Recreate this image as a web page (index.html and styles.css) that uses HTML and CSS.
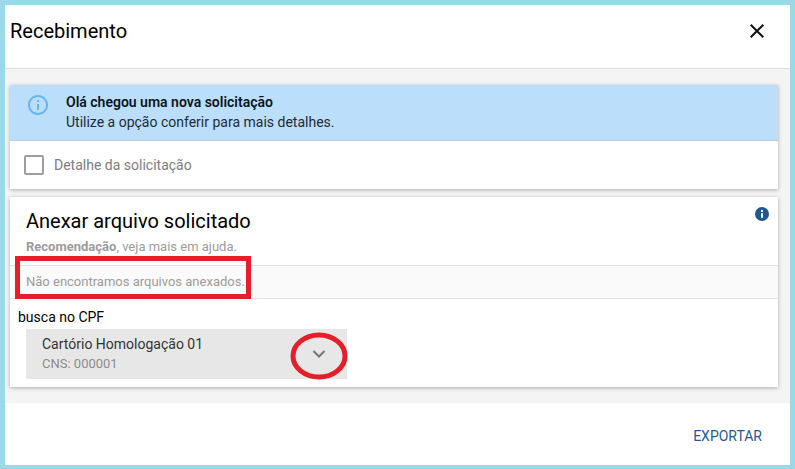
FILE: index.html
```html
<!DOCTYPE html>
<html lang="pt-BR">
<head>
  <meta charset="UTF-8">
  <meta name="viewport" content="width=device-width, initial-scale=1.0">
  <title>Recebimento</title>
  <link rel="stylesheet" href="styles.css">
</head>
<body>
  <div class="dialog">
    <header class="dialog-header">
      <h1>Recebimento</h1>
      <button class="close-btn" type="button" aria-label="Fechar">
        <svg viewBox="0 0 24 24" width="24" height="24"><path d="M5.7 5.7 18.3 18.3M18.3 5.7 5.7 18.3"/></svg>
      </button>
    </header>

    <main class="dialog-content">
      <section class="card">
        <div class="banner">
          <svg class="banner-icon" viewBox="0 0 24 24" width="24" height="26"><path d="M11 7h2v2h-2zm0 4h2v6h-2zm1-9C6.48 2 2 6.48 2 12s4.48 10 10 10 10-4.48 10-10S17.52 2 12 2zm0 18c-4.41 0-8-3.59-8-8s3.59-8 8-8 8 3.59 8 8-3.59 8-8 8z"/></svg>
          <div>
            <strong>Olá chegou uma nova solicitação</strong>
            <p>Utilize a opção conferir para mais detalhes.</p>
          </div>
        </div>
        <label class="check-row">
          <input type="checkbox">
          <span>Detalhe da solicitação</span>
        </label>
      </section>

      <section class="card">
        <div class="card-header">
          <div>
            <h2>Anexar arquivo solicitado</h2>
            <p class="hint"><b>Recomendação</b>, veja mais em ajuda.</p>
          </div>
          <button class="help-btn" type="button" aria-label="Ajuda">
            <svg viewBox="0 0 24 24" width="16" height="16"><path d="M12 1.5a10.5 10.5 0 1 0 0 21 10.5 10.5 0 1 0 0-21zm1.5 16h-3V11h3v6.5zm0-8.5h-3V6h3v3z"/></svg>
          </button>
        </div>

        <div class="empty-row">
          <p class="hint">Não encontramos arquivos anexados.</p>
          <span class="mark-box"></span>
        </div>

        <div class="search">
          <label for="cartorio">busca no CPF</label>
          <div class="select">
            <select id="cartorio" aria-describedby="cns">
              <option>Cartório Homologação 01</option>
            </select>
            <span class="cns" id="cns">CNS: 000001</span>
            <span class="arrow">
              <svg class="chevron" viewBox="0 0 24 24" width="24" height="24"><path d="M6.5 9 12 14.5 17.5 9"/></svg>
              <svg class="mark-circle" viewBox="0 0 58 48" width="58" height="48"><ellipse cx="28" cy="24" rx="26" ry="21"/></svg>
            </span>
          </div>
        </div>
      </section>
    </main>

    <footer class="dialog-footer">
      <button class="export-btn" type="button">EXPORTAR</button>
    </footer>
  </div>
</body>
</html>
```
FILE: styles.css
```css
:root {
  --frame-color: #9ad9e8;
  --mark-color: #e61e28;
  --primary-color: #1d5a93;
  --muted-color: #9c9c9c;
  --line-color: #e0e0e0;
}

* {
  margin: 0;
  padding: 0;
  box-sizing: border-box;
}

body {
  font-family: Roboto, "Liberation Sans", sans-serif;
  font-size: 14px;
  line-height: 20px;
  color: #000;
}

button {
  border: none;
  background: none;
  font: inherit;
  cursor: pointer;
}

svg {
  display: block;
}

.dialog {
  display: flex;
  flex-direction: column;
  min-height: 100vh;
  border: 5px solid var(--frame-color);
  border-bottom-width: 4px;
  background-color: #fff;
}

.dialog-header {
  display: flex;
  justify-content: space-between;
  align-items: flex-start;
  padding: 14px 21px 25px 5px;
  border-bottom: 1px solid #dcdcdc;
}

h1,
h2 {
  font-size: 20px;
  line-height: 24px;
  font-weight: 400;
}

.close-btn path {
  fill: none;
  stroke: #111;
  stroke-width: 2;
}

.dialog-content {
  display: flex;
  flex-direction: column;
  gap: 8px;
  padding: 16px 12px 16px 5px;
  background-color: #f4f4f4;
}

.card {
  background-color: #fff;
  box-shadow: 0 1px 4px rgba(0, 0, 0, 0.3);
}

.banner {
  display: flex;
  gap: 16px;
  padding: 7px 16px 8px;
  background-color: #bbdefb;
  color: #1d2b38;
}

.banner strong {
  display: block;
  font-weight: 600;
  color: #0c1620;
}

.banner-icon {
  fill: #64b5f6;
}

.check-row {
  display: flex;
  align-items: center;
  gap: 10px;
  padding: 14px;
  color: #7d7d7d;
  border-top: 1px solid #b5cde2;
}

.check-row input {
  appearance: none;
  width: 20px;
  height: 20px;
  border: 2px solid #9e9e9e;
  border-radius: 2px;
}

.check-row input:checked {
  background-color: var(--primary-color);
}

.card-header {
  display: flex;
  justify-content: space-between;
  align-items: flex-start;
  padding: 12px 8px 8px 16px;
}

.hint {
  font-size: 13px;
  color: var(--muted-color);
}

.card-header .hint {
  margin-top: 4px;
}

.help-btn {
  margin-top: -3px;
}

.help-btn svg {
  fill: var(--primary-color);
}

.empty-row {
  position: relative;
  padding: 6px 16px;
  background-color: #fafafa;
  border-top: 1px solid var(--line-color);
  border-bottom: 1px solid var(--line-color);
}

/* red highlight around the empty message */
.mark-box {
  position: absolute;
  top: -10px;
  left: 5px;
  width: 236px;
  height: 43px;
  border: 5px solid var(--mark-color);
}

.search {
  padding: 8px;
}

.search label {
  display: block;
}

.select {
  display: grid;
  grid-template-columns: 1fr 56px;
  max-width: 321px;
  margin: 2px 0 0 8px;
}

.select select {
  grid-area: 1 / 1 / 2 / 3;
  appearance: none;
  height: 50px;
  padding: 5px 56px 25px 16px;
  border: none;
  border-radius: 0;
  background-color: #e7e7e7;
  font: inherit;
  color: #333;
}

.cns {
  grid-area: 1 / 1 / 2 / 2;
  align-self: end;
  padding: 0 16px 5px;
  font-size: 13px;
  color: #8c8c8c;
  pointer-events: none;
}

.arrow {
  grid-area: 1 / 2 / 2 / 3;
  position: relative;
  display: grid;
  place-items: center;
  pointer-events: none;
}

.chevron path {
  fill: none;
  stroke: #757575;
  stroke-width: 2;
}

/* red highlight around the arrow */
.mark-circle {
  position: absolute;
  top: 3px;
  left: 0;
  overflow: visible;
  fill: none;
  stroke: var(--mark-color);
  stroke-width: 5;
}

.dialog-footer {
  flex: 1;
  display: flex;
  justify-content: flex-end;
  align-items: center;
  padding: 14px 20px 10px;
}

.export-btn {
  padding: 8px;
  color: var(--primary-color);
}
```
